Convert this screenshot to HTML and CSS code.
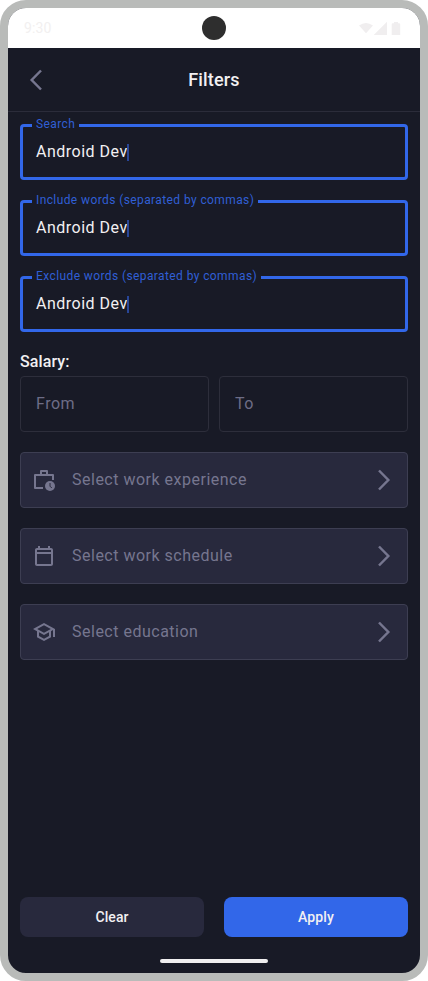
FILE: index.html
```html
<!DOCTYPE html>
<html lang="en">
<head>
<meta charset="utf-8">
<title>Filters</title>
<link rel="stylesheet" href="styles.css">
</head>
<body>
<div class="phone">
  <div class="status">
    <span class="time">9:30</span>
    <span class="camera"></span>
    <svg class="indicators" width="46" height="16" viewBox="0 0 46 16"><path d="M2 4.6Q9 -.8 16 4.6L9 12.2ZM30 .7V14H16.700ZM34.700 14V3.200Q34.700 2.200 35.700 2.200H37V1H41V2.200H42Q43.200 2.200 43.200 3.200V14Z"/></svg>
  </div>
  <header class="header">
    <svg class="chevron" width="24" height="24" viewBox="0 0 24 24"><path d="M17 2.500 7.700 12 17 21.500"/></svg>
    <h1>Filters</h1>
  </header>
  <main class="content">
    <div class="field"><span class="label">Search</span><span class="value">Android Dev</span><i class="caret"></i></div>
    <div class="field"><span class="label">Include words (separated by commas)</span><span class="value">Android Dev</span><i class="caret"></i></div>
    <div class="field"><span class="label">Exclude words (separated by commas)</span><span class="value">Android Dev</span><i class="caret"></i></div>
    <section class="salary">
      <h2>Salary:</h2>
      <div class="range"><div class="box">From</div><div class="box">To</div></div>
    </section>
    <div class="select">
      <svg class="icon" width="24" height="24" viewBox="0 0 24 24"><path class="line" d="M11 20H3V7H21V12M9 7V3H15V7"/><circle cx="18" cy="18" r="5"/><path class="hand" d="M18 15V18.200L19.800 20"/></svg>
      <span>Select work experience</span>
      <svg class="chevron" width="24" height="24" viewBox="0 0 24 24"><path d="M7 2.500 16.300 12 7 21.500"/></svg>
    </div>
    <div class="select">
      <svg class="icon" width="24" height="24" viewBox="0 0 24 24"><path d="M19 4h-1V2h-2v2H8V2H6v2H5c-1.110 0-2 .9-2 2v14c0 1.100.89 2 2 2h14c1.100 0 2-.9 2-2V6c0-1.100-.9-2-2-2zm0 16H5V10h14v10zm0-12H5V6h14v2z"/></svg>
      <span>Select work schedule</span>
      <svg class="chevron" width="24" height="24" viewBox="0 0 24 24"><path d="M7 2.500 16.300 12 7 21.500"/></svg>
    </div>
    <div class="select">
      <svg class="icon" width="24" height="24" viewBox="0 0 24 24"><path d="M12 3 1 9l4 2.180v6L12 21l7-3.820v-6l2-1.090V17h2V9L12 3zm6.820 6L12 12.720 5.180 9 12 5.280 18.820 9zM17 15.990l-5 2.730-5-2.730v-3.720L12 15l5-2.730v3.720z"/></svg>
      <span>Select education</span>
      <svg class="chevron" width="24" height="24" viewBox="0 0 24 24"><path d="M7 2.500 16.300 12 7 21.500"/></svg>
    </div>
  </main>
  <footer class="actions"><button>Clear</button><button class="primary">Apply</button></footer>
  <div class="handle"></div>
</div>
</body>
</html>
```
FILE: styles.css
```css
* { box-sizing: border-box; }
body { margin: 0; background: #fff; font-family: Roboto, sans-serif; }
.phone {
  width: 428px; height: 981px;
  display: flex; flex-direction: column;
  border: 8px solid #b9bbb9; border-radius: 26px;
  background: #181a26; overflow: hidden;
}
.status {
  height: 40px; flex: none; background: #fff;
  display: grid; grid-template-columns: 1fr 24px 1fr; align-items: center;
  padding: 0 17px 0 16px;
}
.time { font-size: 14px; line-height: 20px; letter-spacing: .14px; color: #f2f0f0; }
.camera { width: 24px; height: 24px; border-radius: 50%; background: #2e2e2e; }
.indicators { justify-self: end; fill: #f0eeef; margin-top: 1px; }
.header {
  height: 64px; flex: none; padding: 0 16px;
  display: grid; grid-template-columns: 24px 1fr 24px; align-items: center;
  border-bottom: 1px solid #2b2c3a;
}
h1 { margin: 0; text-align: center; font-size: 18px; line-height: 24px; font-weight: 500; letter-spacing: .15px; color: #f2f0f2; }
.chevron { fill: none; stroke: #76768f; stroke-width: 2.500; }
.content { flex: 1; padding: 12px 12px 0; display: flex; flex-direction: column; gap: 20px; }
.field {
  height: 56px; position: relative; display: flex; align-items: center;
  padding: 0 13px; border: 3px solid #3267e9; border-radius: 4px;
  font-size: 16px; line-height: 24px; letter-spacing: .5px; color: #f2f0f2;
}
.label {
  position: absolute; left: 9px; top: -11px; padding: 0 4px; background: #181a26;
  color: #305fd5; font-size: 12px; line-height: 16px; letter-spacing: .4px;
}
.caret { width: 2px; height: 17px; margin-left: -1px; background: #284698; }
.salary { display: flex; flex-direction: column; gap: 4px; margin-top: -1px; }
h2 { margin: 0; height: 21px; font-size: 16px; line-height: 22px; font-weight: 500; letter-spacing: .1px; color: #f2f0f2; }
.range { display: flex; gap: 10px; }
.box {
  flex: 1; height: 56px; padding: 15px; line-height: 24px; font-size: 16px;
  letter-spacing: .5px; color: #6d6d86; border: 1px solid #2d2e3b; border-radius: 4px;
}
.select {
  height: 56px; display: flex; align-items: center; gap: 16px; padding: 0 11px;
  background: #28293d; border: 1px solid #3d3e52; border-radius: 4px;
  color: #76768f; font-size: 16px; line-height: 24px; letter-spacing: .5px;
}
.select span { flex: 1; }
.icon { fill: #76768f; }
.line { fill: none; stroke: #76768f; stroke-width: 2; stroke-linejoin: round; }
.hand { fill: none; stroke: #28293d; stroke-width: 1; }
.actions { display: flex; gap: 20px; padding: 0 12px; }
button {
  flex: 1; height: 40px; padding: 0; border: 0; border-radius: 8px; background: #28293d;
  color: #f2f0f2; font: 500 14px/20px Roboto, sans-serif; letter-spacing: .1px;
}
.primary { background: #3267e9; }
.handle { flex: none; width: 108px; height: 4px; margin: 22px auto 10px; border-radius: 2px; background: #f0eff0; }
```
